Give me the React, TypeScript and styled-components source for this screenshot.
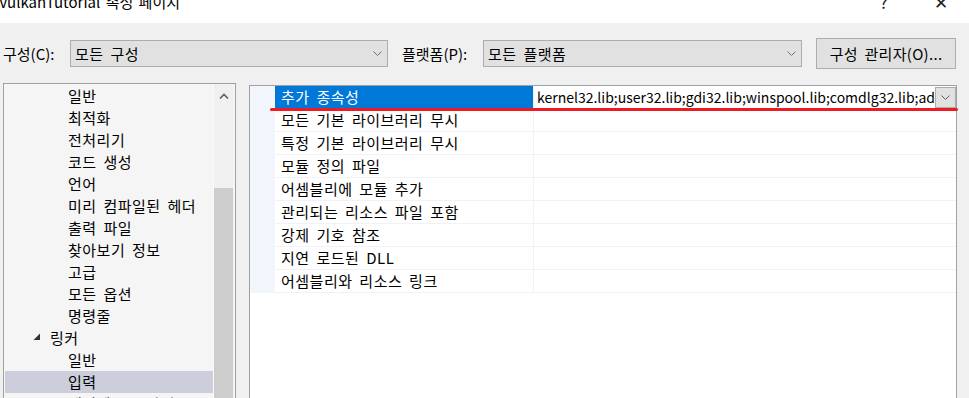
import React from "react";
import styled, { createGlobalStyle } from "styled-components";

const Global = createGlobalStyle`
  html, body { margin: 0; padding: 0; background: #f0f0f0; overflow: hidden; }
  * { box-sizing: border-box; }
`;

const FONT = `"Noto Sans CJK KR", "Noto Sans", sans-serif`;

const Window = styled.div`
  width: 969px;
  height: 398px;
  overflow: hidden;
  display: flex;
  flex-direction: column;
  background: #f0f0f0;
  font-family: ${FONT};
  font-size: 15px;
  letter-spacing: 0.5px;
  word-spacing: 3px;
  color: #000;
  position: relative;
`;

const TitleBar = styled.div`
  height: 23px;
  background: #fff;
  display: flex;
  align-items: flex-start;
  overflow: hidden;
  flex-shrink: 0;
`;

const TitleText = styled.div`
  margin-top: -9px;
  margin-left: -1px;
  font-size: 15px;
  letter-spacing: 0;
  word-spacing: 2px;
  line-height: 22px;
  flex: 1;
  white-space: nowrap;
`;

const TitleButton = styled.div<{ $mr: number }>`
  width: 46px;
  margin-top: -9px;
  margin-right: ${(p) => p.$mr}px;
  text-align: center;
  font-size: 17px;
  line-height: 22px;
  color: #222;
`;

const Toolbar = styled.div`
  display: flex;
  align-items: center;
  height: 60px;
  padding: 0 0 0 3px;
  flex-shrink: 0;
`;

const Label = styled.div<{ $w: number; $ml?: number }>`
  width: ${(p) => p.$w}px;
  margin-left: ${(p) => p.$ml ?? 0}px;
  white-space: nowrap;
  letter-spacing: 0;
  word-spacing: 0;
  line-height: 27px;
`;

const Combo = styled.div<{ $w: number }>`
  width: ${(p) => p.$w}px;
  height: 27px;
  background: #e1e1e1;
  border: 1px solid #adadad;
  display: flex;
  align-items: center;
  padding-left: 4px;
  padding-right: 5px;
  line-height: 25px;
`;

const ComboText = styled.span`
  flex: 1;
  white-space: nowrap;
`;

const Button = styled.div`
  margin-left: 14px;
  width: 140px;
  height: 31px;
  background: #e1e1e1;
  border: 1px solid #adadad;
  display: flex;
  align-items: center;
  justify-content: center;
  letter-spacing: 0.3px;
`;

const Body = styled.div`
  flex: 1;
  display: flex;
  padding: 0 0 0 3px;
  min-height: 0;
`;

const TreePanel = styled.div`
  width: 233px;
  border: 1px solid #a0a0a0;
  border-bottom: none;
  background: #f5f5f5;
  display: flex;
  padding-right: 2px;
`;

const TreeList = styled.div`
  flex: 1;
  padding: 1px 0 0 1px;
  border-right: 1px solid #fbfbfb;
`;

const TreeRow = styled.div<{ $selected?: boolean; $indent: number }>`
  height: 22px;
  line-height: 22px;
  padding-left: ${(p) => p.$indent}px;
  background: ${(p) => (p.$selected ? "#cccedb" : "transparent")};
  white-space: nowrap;
  display: flex;
  align-items: center;
`;

const Expander = styled.span`
  width: 17px;
  display: inline-flex;
  align-items: center;
  margin-left: -17px;
  padding-bottom: 2px;
`;

const ScrollBar = styled.div`
  width: 19px;
  background: #f0f0f0;
  display: flex;
  flex-direction: column;
`;

const ScrollArrow = styled.div`
  height: 24px;
  display: flex;
  align-items: center;
  justify-content: center;
`;

const ScrollSpace = styled.div`
  height: 80px;
`;

const ScrollThumb = styled.div`
  flex: 1;
  background: #cdcdcd;
`;

const GridPanel = styled.div`
  margin-left: 13px;
  margin-top: 2px;
  width: 708px;
  border: 1px solid #a0a0a0;
  border-bottom: none;
  background: #fff;
  display: flex;
  flex-direction: column;
`;

const GridBody = styled.div`
  display: grid;
  grid-template-columns: 25px 259px 1fr;
`;

const Gutter = styled.div`
  background: #f2f5fb;
`;

const NameCell = styled.div<{ $selected?: boolean }>`
  height: 23px;
  line-height: 22px;
  padding-left: 6px;
  white-space: nowrap;
  background: ${(p) => (p.$selected ? "#0078d7" : "#fff")};
  color: ${(p) => (p.$selected ? "#fff" : "#000")};
  border-bottom: 1px solid ${(p) => (p.$selected ? "#0078d7" : "#f0f2f8")};
  border-right: 1px solid #f0f2f8;
`;

const ValueCell = styled.div`
  height: 23px;
  line-height: 22px;
  border-bottom: 1px solid #f0f2f8;
  display: flex;
  align-items: flex-start;
  overflow: hidden;
`;

const ValueText = styled.span`
  flex: 1;
  padding-left: 3px;
  font-size: 14px;
  letter-spacing: 0;
  word-spacing: 0;
  white-space: nowrap;
  overflow: hidden;
`;

const DropButton = styled.div`
  width: 21px;
  height: 21px;
  margin-top: 1px;
  background: #e1e1e1;
  border: 1px solid #adadad;
  display: flex;
  align-items: center;
  justify-content: center;
  flex-shrink: 0;
`;

const Annotation = styled.div`
  position: absolute;
  left: 270px;
  top: 108px;
  width: 688px;
  height: 3px;
  border-radius: 2px;
  background: #ed1c24;
`;

const Chevron = ({ w = 9, color = "#707070" }: { w?: number; color?: string }) => (
  <svg width={w} height={5} viewBox="0 0 9 5">
    <polyline points="0.5,0.5 4.5,4.5 8.5,0.5" fill="none" stroke={color} strokeWidth="1" />
  </svg>
);

const UpChevron = () => (
  <svg width={10} height={6} viewBox="0 0 10 6">
    <polyline points="1,5.5 5,1.5 9,5.5" fill="none" stroke="#606060" strokeWidth="1.6" />
  </svg>
);

const ExpandedTri = () => (
  <svg width={8} height={8} viewBox="0 0 8 8">
    <polygon points="7,0.5 7,7 0.5,7" fill="#333" />
  </svg>
);

const treeItems: { text: string; indent: number; expanded?: boolean; selected?: boolean }[] = [
  { text: "일반", indent: 63 },
  { text: "최적화", indent: 63 },
  { text: "전처리기", indent: 63 },
  { text: "코드 생성", indent: 63 },
  { text: "언어", indent: 63 },
  { text: "미리 컴파일된 헤더", indent: 63 },
  { text: "출력 파일", indent: 63 },
  { text: "찾아보기 정보", indent: 63 },
  { text: "고급", indent: 63 },
  { text: "모든 옵션", indent: 63 },
  { text: "명령줄", indent: 63 },
  { text: "링커", indent: 45, expanded: true },
  { text: "일반", indent: 63 },
  { text: "입력", indent: 63, selected: true },
  { text: "매니페스트 파일", indent: 63 },
];

const props: { name: string; value?: string }[] = [
  { name: "추가 종속성", value: "kernel32.lib;user32.lib;gdi32.lib;winspool.lib;comdlg32.lib;advapi32.lib;shell32.lib" },
  { name: "모든 기본 라이브러리 무시" },
  { name: "특정 기본 라이브러리 무시" },
  { name: "모듈 정의 파일" },
  { name: "어셈블리에 모듈 추가" },
  { name: "관리되는 리소스 파일 포함" },
  { name: "강제 기호 참조" },
  { name: "지연 로드된 DLL" },
  { name: "어셈블리와 리소스 링크" },
];

export default function App() {
  return (
    <>
      <Global />
      <Window>
        <TitleBar>
          <TitleText>VulkanTutorial 속성 페이지</TitleText>
          <TitleButton $mr={11}>?</TitleButton>
          <TitleButton $mr={5}>✕</TitleButton>
        </TitleBar>
        <Toolbar>
          <Label $w={67}>구성(C):</Label>
          <Combo $w={318}>
            <ComboText>모든 구성</ComboText>
            <Chevron />
          </Combo>
          <Label $w={81} $ml={14}>플랫폼(P):</Label>
          <Combo $w={319}>
            <ComboText>모든 플랫폼</ComboText>
            <Chevron />
          </Combo>
          <Button>구성 관리자(O)...</Button>
        </Toolbar>
        <Body>
          <TreePanel>
            <TreeList>
              {treeItems.map((t, i) => (
                <TreeRow key={i} $indent={t.indent} $selected={t.selected}>
                  {t.expanded && (
                    <Expander>
                      <ExpandedTri />
                    </Expander>
                  )}
                  {t.text}
                </TreeRow>
              ))}
            </TreeList>
            <ScrollBar>
              <ScrollArrow>
                <UpChevron />
              </ScrollArrow>
              <ScrollSpace />
              <ScrollThumb />
            </ScrollBar>
          </TreePanel>
          <GridPanel>
            <GridBody>
              {props.map((p, i) => (
                <React.Fragment key={i}>
                  <Gutter />
                  <NameCell $selected={i === 0}>{p.name}</NameCell>
                  <ValueCell>
                    {p.value && (
                      <>
                        <ValueText>{p.value}</ValueText>
                        <DropButton>
                          <Chevron color="#606060" />
                        </DropButton>
                      </>
                    )}
                  </ValueCell>
                </React.Fragment>
              ))}
            </GridBody>
          </GridPanel>
        </Body>
        <Annotation />
      </Window>
    </>
  );
}
